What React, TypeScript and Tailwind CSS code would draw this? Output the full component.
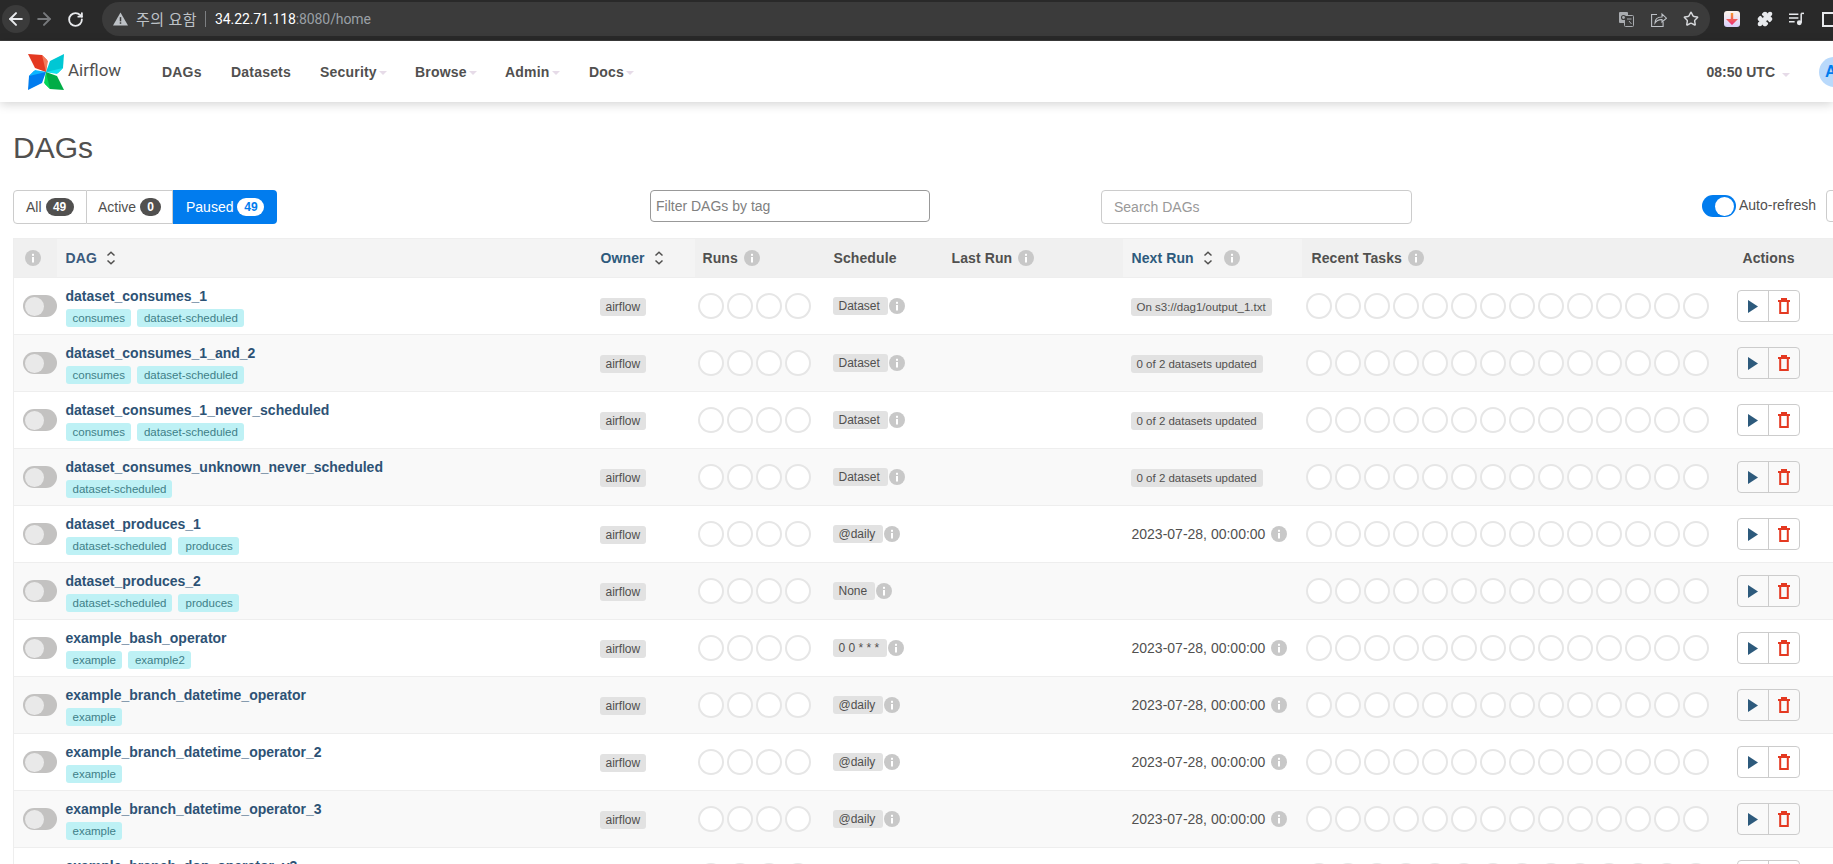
import React from "react";
import { ArrowLeft, ArrowRight, RotateCw, Star, Puzzle } from "lucide-react";

type Dag = {
  name: string;
  tags: string[];
  schedule: string;
  next?: string;
  nextLabel?: string;
};

const s3 = "On s3://dag1/output_1.txt";
const partial = "0 of 2 datasets updated";
const date = "2023-07-28, 00:00:00";

const dags: Dag[] = [
  { name: "dataset_consumes_1", tags: ["consumes", "dataset-scheduled"], schedule: "Dataset", nextLabel: s3 },
  { name: "dataset_consumes_1_and_2", tags: ["consumes", "dataset-scheduled"], schedule: "Dataset", nextLabel: partial },
  { name: "dataset_consumes_1_never_scheduled", tags: ["consumes", "dataset-scheduled"], schedule: "Dataset", nextLabel: partial },
  { name: "dataset_consumes_unknown_never_scheduled", tags: ["dataset-scheduled"], schedule: "Dataset", nextLabel: partial },
  { name: "dataset_produces_1", tags: ["dataset-scheduled", "produces"], schedule: "@daily", next: date },
  { name: "dataset_produces_2", tags: ["dataset-scheduled", "produces"], schedule: "None" },
  { name: "example_bash_operator", tags: ["example", "example2"], schedule: "0 0 * * *", next: date },
  { name: "example_branch_datetime_operator", tags: ["example"], schedule: "@daily", next: date },
  { name: "example_branch_datetime_operator_2", tags: ["example"], schedule: "@daily", next: date },
  { name: "example_branch_datetime_operator_3", tags: ["example"], schedule: "@daily", next: date },
  { name: "example_branch_dop_operator_v3", tags: ["example"], schedule: "*/1 * * * *", next: date },
];

const Info = () => (
  <svg viewBox="0 0 16 16" className="w-4 h-4 shrink-0">
    <circle cx="8" cy="8" r="8" fill="#c8c8c8" />
    <rect x="7" y="7" width="2" height="5.5" fill="#fff" />
    <rect x="7" y="3.8" width="2" height="2" fill="#fff" />
  </svg>
);

const Sort = () => (
  <svg viewBox="0 0 10 14" className="w-[10px] h-[14px] shrink-0" fill="none" stroke="#51504f" strokeWidth="1.5">
    <path d="M1.5 4.5 5 1.2l3.5 3.3" />
    <path d="M1.5 9.5 5 12.8l3.5-3.3" />
  </svg>
);

const Caret = () => <span className="inline-block ml-[2px] mt-[2px] border-x-[4px] border-t-[4px] border-x-transparent border-t-[#e6dbe8]" />;

const Circles = ({ count }: { count: number }) => (
  <div className="flex gap-[3px]">
    {Array.from({ length: count }).map((_, i) => (
      <div key={i} className="w-[26px] h-[26px] rounded-full bg-white border-2 border-[#e6e6e6]" />
    ))}
  </div>
);

const Logo = () => {
  const blades = [
    { rotate: 0, main: "#e43921", shade: "#f37a5a" },
    { rotate: 90, main: "#00c7d4", shade: "#11e1ee" },
    { rotate: 180, main: "#00ad46", shade: "#04d659" },
    { rotate: 270, main: "#017cee", shade: "#0cb6ff" },
  ];
  return (
    <svg viewBox="0 0 36 36" className="w-9 h-9 shrink-0">
      {blades.map((b) => (
        <g key={b.rotate} transform={`rotate(${b.rotate} 18 18)`}>
          <polygon points="0,0 14,1 19,6 18,18 7,14" fill={b.main} />
          <polygon points="14,1 20,7 18,18" fill={b.shade} />
        </g>
      ))}
    </svg>
  );
};

const Label = ({ children, className = "px-[6px] text-xs" }: { children: React.ReactNode; className?: string }) => (
  <span className={`inline-block h-[18px] leading-[18px] rounded-[3px] bg-[#e2e2e2] text-[#51504f] whitespace-nowrap ${className}`}>
    {children}
  </span>
);

const BrowserBar = () => (
  <div className="h-[41px] bg-[#292929] border-b border-[#3c3c3c] flex items-start pt-[2px] text-white">
    <div className="w-[102px] h-[34px] flex items-center shrink-0">
      <div className="ml-[2px] w-7 h-7 rounded-full bg-[#3b3b3b] flex items-center justify-center">
        <ArrowLeft size={20} color="#e8eaed" strokeWidth={2.4} />
      </div>
      <ArrowRight size={20} color="#77797c" strokeWidth={2.4} className="ml-[4px]" />
      <RotateCw size={17} color="#e8eaed" strokeWidth={2.6} className="ml-[13px]" />
    </div>
    <div className="w-[1608px] h-[34px] rounded-full bg-[#3b3b3b] flex items-center pl-[11px] pr-[11px] shrink-0">
      <svg viewBox="0 0 16 14" className="w-[15px] h-[14px] shrink-0">
        <path d="M8 0 16 14H0Z" fill="#bdc1c6" />
        <rect x="7.2" y="5" width="1.6" height="4.5" fill="#3b3b3b" />
        <rect x="7.2" y="10.5" width="1.6" height="1.6" fill="#3b3b3b" />
      </svg>
      <span className="ml-[8px] text-[15px] tracking-[0.5px] text-[#bdc1c6] font-['Noto_Sans_CJK_KR',sans-serif]">주의 요함</span>
      <span className="ml-[8px] w-px h-[16px] bg-[#7d7f82]" />
      <span className="ml-[9px] text-sm tracking-[-0.1px] font-['Roboto',sans-serif] text-white">
        34.22.71.118<span className="text-[#9aa0a6]">:8080/home</span>
      </span>
      <div className="ml-auto flex items-center">
        <svg viewBox="0 0 15 15" className="w-[15px] h-[15px]">
          <rect x="0" y="0" width="9" height="11" rx="1" fill="#a9acb0" />
          <rect x="5.5" y="3.5" width="9" height="11" rx="1" fill="#3b3b3b" stroke="#a9acb0" />
          <circle cx="4.5" cy="5.5" r="2" fill="none" stroke="#3b3b3b" strokeWidth="1.1" />
          <path d="M8 7h4.5M10 9l2.5 3" stroke="#a9acb0" fill="none" />
        </svg>
        <svg viewBox="0 0 16 15" className="w-4 h-[15px] ml-[17px]" fill="none" stroke="#bdc1c6" strokeWidth="1.1">
          <path d="M6 2.5H.6v12h11.5V10" />
          <path d="M4 11c0-4 3-6 7-6V2l4.5 4.2L11 10V7.6C8 7.4 5.5 8.5 4 11Z" />
        </svg>
        <Star size={16} color="#d5d7da" strokeWidth={2.2} className="ml-[16px]" />
      </div>
    </div>
    <div className="h-[34px] flex items-center pl-[14px]">
      <div className="w-4 h-4 rounded-[3px] bg-gradient-to-b from-[#fdf3ea] to-[#d9d0fb] flex items-center justify-center">
        <svg viewBox="0 0 12 12" className="w-3 h-3">
          <defs>
            <linearGradient id="extArrow" x1="0" y1="0" x2="0" y2="1">
              <stop offset="0" stopColor="#f79a2e" />
              <stop offset="1" stopColor="#ec2a7d" />
            </linearGradient>
          </defs>
          <path d="M4.8 0h2.4v6H12L6 12 0 6h4.8Z" fill="url(#extArrow)" />
        </svg>
      </div>
      <Puzzle size={16} fill="#e8eaed" color="#e8eaed" className="ml-[17px]" />
      <svg viewBox="0 0 16 14" className="w-[15px] h-[14px] ml-[16px]" fill="none" stroke="#e8eaed" strokeWidth="1.6">
        <path d="M0 2h10M0 6h10M0 10h6" />
        <path d="M13 1v10" />
        <path d="M13 1h3" />
        <circle cx="11" cy="11" r="1.8" fill="#e8eaed" />
      </svg>
      <div className="w-[14px] h-[15px] border-2 border-[#e8eaed] ml-[18px] shrink-0" />
    </div>
  </div>
);

const NavBar = () => {
  const links: [string, boolean, string][] = [
    ["DAGs", false, "w-[69px]"],
    ["Datasets", false, "w-[89px]"],
    ["Security", true, "w-[95px]"],
    ["Browse", true, "w-[90px]"],
    ["Admin", true, "w-[84px]"],
    ["Docs", true, "w-[60px]"],
  ];
  return (
    <div className="relative z-10 h-[61px] bg-white shadow-[0_2px_10px_rgba(0,0,0,0.18)] flex items-center">
      <div className="ml-[28px] flex items-center w-[134px] shrink-0">
        <Logo />
        <span className="ml-[4px] text-[17px] -mt-[2px] text-[#51504f] font-['Roboto',sans-serif]">Airflow</span>
      </div>
      {links.map(([label, caret, width]) => (
        <div key={label} className={`${width} flex items-center text-sm font-bold text-[#51504f] tracking-[0.2px]`}>
          {label}
          {caret && <Caret />}
        </div>
      ))}
      <div className="ml-auto flex items-center mr-[-16px]">
        <span className="text-sm font-bold text-[#51504f]">08:50 UTC</span>
        <span className="ml-[5px]"><Caret /></span>
        <div className="ml-[29px] w-[30px] h-[30px] rounded-full bg-[#b9d9fb] text-[#017cee] font-bold text-base flex items-center pl-[6px] shrink-0">
          A
        </div>
      </div>
    </div>
  );
};

const Tabs = () => (
  <div className="flex h-[34px] w-[264px] text-sm shrink-0">
    <div className="w-[74px] flex items-center pl-[12px] border border-[#ccc] rounded-l text-[#51504f]">
      All
      <span className="ml-[4px] w-[28px] h-[18px] rounded-full bg-[#51504f] text-white text-xs font-bold flex items-center justify-center">49</span>
    </div>
    <div className="w-[86px] flex items-center pl-[11px] border-y border-r border-[#ccc] text-[#51504f]">
      Active
      <span className="ml-[4px] w-[21px] h-[18px] rounded-full bg-[#51504f] text-white text-xs font-bold flex items-center justify-center">0</span>
    </div>
    <div className="w-[104px] flex items-center pl-[13px] bg-[#017cee] rounded-r text-white">
      Paused
      <span className="ml-[4px] w-[27px] h-[18px] rounded-full bg-white text-[#017cee] text-xs font-bold flex items-center justify-center">49</span>
    </div>
  </div>
);

const Toolbar = () => (
  <div className="flex items-start w-[1900px] mt-[24px]">
    <Tabs />
    <div className="ml-[373px] w-[280px] h-[32px] shrink-0 border border-[#999] rounded flex items-center pl-[5px] text-sm text-[#808080]">
      Filter DAGs by tag
    </div>
    <div className="ml-[171px] w-[311px] h-[34px] shrink-0 border border-[#ccc] rounded flex items-center pl-[12px] text-sm text-[#999]">
      Search DAGs
    </div>
    <div className="ml-[290px] mt-[5px] w-[34px] h-[22px] rounded-full bg-[#017cee] flex items-center justify-end pr-[2px] shrink-0">
      <span className="w-[19px] h-[19px] rounded-full bg-white" />
    </div>
    <span className="ml-[3px] mt-[5px] text-sm leading-[20px] text-[#51504f] shrink-0">Auto-refresh</span>
    <div className="ml-[10px] w-[60px] h-[32px] border border-[#ccc] rounded shrink-0" />
  </div>
);

const Row = ({ dag, odd }: { dag: Dag; odd: boolean }) => (
  <tr className={odd ? "bg-[#f9f9f9]" : "bg-white"}>
    <td className="h-[57px] border-b border-[#eee] pl-[9px]">
      <div className="w-[34px] h-[22px] rounded-full bg-[#c3c2c1] flex items-center pl-[2px]">
        <span className="w-[19px] h-[19px] rounded-full bg-[#e9e9e9]" />
      </div>
    </td>
    <td className="border-b border-[#eee] pl-[9px]">
      <div className="text-sm leading-5 font-bold text-[#2d5275] whitespace-nowrap">{dag.name}</div>
      <div className="flex gap-[6px] mt-[3px]">
        {dag.tags.map((tag) => (
          <span key={tag} className="h-[18px] leading-[18px] pl-[7px] pr-[6px] rounded-[3px] bg-[#bef1f5] text-[11.5px] text-[#3f7f88] whitespace-nowrap">
            {tag}
          </span>
        ))}
      </div>
    </td>
    <td className="border-b border-[#eee] pl-2"><Label>airflow</Label></td>
    <td className="border-b border-[#eee] pl-[3px]"><Circles count={4} /></td>
    <td className="border-b border-[#eee] pl-2">
      <div className="flex items-center gap-[1px]">
        <Label className="pl-[6px] pr-[8px] text-xs">{dag.schedule}</Label>
        <Info />
      </div>
    </td>
    <td className="border-b border-[#eee]" />
    <td className="border-b border-[#eee] pl-[9px]">
      {dag.nextLabel && <Label className="-ml-px px-[6px] text-[11.5px]">{dag.nextLabel}</Label>}
      {dag.next && (
        <div className="flex items-center gap-[6px] text-sm text-[#51504f] whitespace-nowrap">
          {dag.next}
          <Info />
        </div>
      )}
    </td>
    <td className="border-b border-[#eee] pl-[4px]"><Circles count={14} /></td>
    <td className="border-b border-[#eee] pl-2">
      <div className="flex w-[63px] h-[32px] border border-[#ccc] rounded">
        <div className="w-[31px] border-r border-[#ccc] flex items-center justify-center">
          <svg viewBox="0 0 10 13" className="w-[10px] h-[13px]">
            <path d="M0 0 10 6.5 0 13Z" fill="#2d5a7c" />
          </svg>
        </div>
        <div className="flex-1 flex items-center justify-center">
          <svg viewBox="0 0 12 16" className="w-[12px] h-[16px]" fill="none" stroke="#e43921" strokeWidth="2">
            <path d="M0 3h12" />
            <path d="M4 2.5V1h4v1.5" />
            <path d="M2.2 3v12h7.6V3" />
          </svg>
        </div>
      </div>
    </td>
    <td className="border-b border-[#eee]" />
  </tr>
);

export default function App() {
  return (
    <div className="h-[864px] w-[1833px] overflow-hidden bg-white font-['Liberation_Sans',Arial,sans-serif]">
      <BrowserBar />
      <NavBar />
      <div className="pl-[13px]">
        <h1 className="text-[30px] leading-[36px] mt-[28px] text-[#51504f]">DAGs</h1>
        <Toolbar />
        <table className="table-fixed w-[1819px] mt-[14px] border-l border-[#eee]">
          <colgroup>
            <col className="w-[43px]" />
            <col className="w-[535px]" />
            <col className="w-[103px]" />
            <col className="w-[130px]" />
            <col className="w-[119px]" />
            <col className="w-[179px]" />
            <col className="w-[179px]" />
            <col className="w-[427px]" />
            <col className="w-[103px]" />
            <col />
          </colgroup>
          <thead>
            <tr className="h-[39px] text-sm font-bold text-left text-[#51504f] tracking-[0.1px]">
              <th className="bg-[#f0f0f0] border-y border-[#eee] pl-[11px]"><Info /></th>
              <th className="bg-[#f4f4f4] border-y border-[#eee] pl-[9px]">
                <div className="flex items-center gap-[9px] text-[#3a5a7c]">DAG <Sort /></div>
              </th>
              <th className="bg-[#f4f4f4] border-y border-[#eee] pl-[9px]">
                <div className="flex items-center gap-[9px] text-[#2d5a7c]">Owner <Sort /></div>
              </th>
              <th className="bg-[#f0f0f0] border-y border-[#eee] pl-2">
                <div className="flex items-center gap-[6px]">Runs <Info /></div>
              </th>
              <th className="bg-[#f0f0f0] border-y border-[#eee] pl-[9px] font-bold">Schedule</th>
              <th className="bg-[#f0f0f0] border-y border-[#eee] pl-2">
                <div className="flex items-center gap-[6px]">Last Run <Info /></div>
              </th>
              <th className="bg-[#f4f4f4] border-y border-[#eee] pl-[9px]">
                <div className="flex items-center gap-[9px] text-[#2d5a7c]">Next Run <Sort /><span className="ml-[2px]"><Info /></span></div>
              </th>
              <th className="bg-[#f0f0f0] border-y border-[#eee] pl-[10px]">
                <div className="flex items-center gap-[6px]">Recent Tasks <Info /></div>
              </th>
              <th className="bg-[#f0f0f0] border-y border-[#eee] pl-[14px]">Actions</th>
              <th className="bg-[#f0f0f0] border-y border-[#eee]" />
            </tr>
          </thead>
          <tbody>
            {dags.map((dag, i) => (
              <Row key={dag.name} dag={dag} odd={i % 2 === 1} />
            ))}
          </tbody>
        </table>
      </div>
    </div>
  );
}
